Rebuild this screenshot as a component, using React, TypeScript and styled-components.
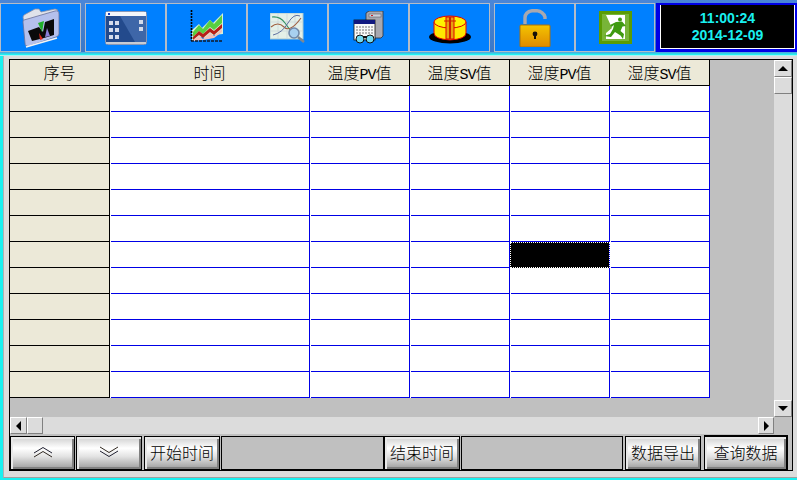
import styled, { createGlobalStyle } from "styled-components";

const GlobalStyle = createGlobalStyle`
	html, body {
		margin: 0;
		padding: 0;
		background: #19f0f0;
	}
`;

const CJK = `"Noto Sans CJK SC", "Liberation Sans", sans-serif`;

const Page = styled.div`
	width: 797px;
	height: 480px;
	overflow: hidden;
	display: flex;
	flex-direction: column;
	background: #19f0f0;
	font-family: ${CJK};
	font-weight: 300;
	color: #000;
`;

/* top navigation */
const TopBar = styled.div`
	height: 49px;
	padding-top: 3px;
	display: flex;
	background: linear-gradient(180deg, #4a86d8 0, #3a78c8 100%);
`;
const Tab = styled.div<{ $width: number; $gap?: number }>`
	box-sizing: border-box;
	width: ${(p) => p.$width}px;
	height: 49px;
	margin-right: ${(p) => p.$gap ?? 0}px;
	display: flex;
	align-items: center;
	justify-content: center;
	background: #0080ff;
	border: 1px solid #b4bcc8;
`;
const Clock = styled.div`
	flex: 1;
	height: 49px;
	box-sizing: border-box;
	margin-left: 1px;
	border: solid #0000e6;
	border-width: 2px 2px 3px 4px;
	background: #000;
	display: flex;
`;
const ClockInner = styled.div`
	flex: 1;
	border: solid #fff;
	border-width: 0 1px 1px 1px;
	display: flex;
	flex-direction: column;
	align-items: center;
	justify-content: center;
	gap: 3px;
	color: #19f0f0;
	font-family: "Liberation Sans", sans-serif;
	font-weight: 700;
	font-size: 14px;
	line-height: 14px;
`;
const BarEdge = styled.div`
	height: 4px;
	background: linear-gradient(180deg, #5aa0d8 0, #19f0f0 60%, #e8f4f4 100%);
`;

/* frame around the table page */
const Frame = styled.div`
	flex: 1;
	margin: 0 0 2px 3px;
	padding: 3px 5px 6px 5px;
	background: #dcdcdc;
	border-left: 1px solid #b0b0b0;
	border-bottom: 1px solid #a0a0a0;
	display: flex;
`;
const Panel = styled.div`
	box-sizing: border-box;
	width: 784px;
	border: 1px solid #000;
	background: #c0c0c0;
	display: flex;
	flex-direction: column;
`;
const ScrollArea = styled.div`
	display: grid;
	grid-template-columns: 764px 18px;
	grid-template-rows: 357px 17px;
`;
const TableView = styled.div`
	background: #c0c0c0;
`;
const Table = styled.div`
	display: grid;
	grid-template-columns: 100px 200px 100px 100px 100px 100px;
	grid-auto-rows: 26px;
	width: 700px;
`;
const HeadCell = styled.div`
	box-sizing: border-box;
	display: flex;
	align-items: center;
	justify-content: center;
	padding-bottom: 1px;
	background: #ece9d8;
	border-right: 1px solid #000;
	border-bottom: 1px solid #000;
	font-size: 16px;
	line-height: 22px;
`;
const Latin = styled.span`
	font-family: "Liberation Mono", monospace;
	font-size: 15px;
	line-height: 16px;
	letter-spacing: -1px;
`;
const RowHead = styled.div`
	box-sizing: border-box;
	background: #ece9d8;
	border-right: 1px solid #000;
	border-bottom: 1px solid #000;
`;
const Cell = styled.div<{ $selected?: boolean }>`
	box-sizing: border-box;
	border-right: 1px solid #0000e6;
	background: ${(p) =>
		p.$selected
			? "#000"
			: "linear-gradient(#0000e6, #0000e6) no-repeat 1px 100% / calc(100% - 1px) 1px #fff"};
	${(p) =>
		p.$selected &&
		`
		outline: 1px dotted #fff;
		outline-offset: -1px;
		border-bottom: 1px dotted #ffff00;
	`}
`;

/* scroll bars */
const VBar = styled.div`
	grid-column: 2;
	grid-row: 1;
	display: flex;
	flex-direction: column;
	background: #dcdcdc;
`;
const HBar = styled.div`
	grid-column: 1;
	grid-row: 2;
	display: flex;
	background: #dcdcdc;
`;
const Track = styled.div`
	flex: 1;
`;
const ScrollBtn = styled.div<{ $w: number; $h: number }>`
	box-sizing: border-box;
	width: ${(p) => p.$w}px;
	height: ${(p) => p.$h}px;
	flex: none;
	display: flex;
	align-items: center;
	justify-content: center;
	background: #dcdcdc;
	border: 1px solid;
	border-color: #fff #808080 #808080 #fff;
`;
const Arrow = styled.div<{ $dir: "up" | "down" | "left" | "right" }>`
	width: 0;
	height: 0;
	border-style: solid;
	${(p) => p.$dir === "up" && "border-width: 0 5px 5px 5px; border-color: transparent transparent #000 transparent;"}
	${(p) => p.$dir === "down" && "border-width: 5px 5px 0 5px; border-color: #000 transparent transparent transparent;"}
	${(p) => p.$dir === "left" && "border-width: 5px 5px 5px 0; border-color: transparent #000 transparent transparent;"}
	${(p) => p.$dir === "right" && "border-width: 5px 0 5px 5px; border-color: transparent transparent transparent #000;"}
`;

/* bottom toolbar */
const Toolbar = styled.div`
	flex: 1;
	padding-top: 2px;
	display: flex;
	align-items: stretch;
`;
const Button = styled.div<{ $width: number; $gap?: number; $strong?: boolean }>`
	box-sizing: border-box;
	width: ${(p) => p.$width}px;
	margin-right: ${(p) => p.$gap ?? 0}px;
	display: flex;
	align-items: center;
	justify-content: center;
	padding-bottom: 2px;
	font-size: 16px;
	line-height: 22px;
	border: 1px solid #000;
	${(p) => p.$strong && "border-width: 2px 2px 1px 1px; margin-top: -1px;"}
	box-shadow: inset 2px 2px 0 #e8e8e8, inset -2px -2px 0 #808080;
	background: linear-gradient(180deg, #cfcfcf 0, #ffffff 35%, #e4e4e4 60%, #9c9c9c 100%);
`;
const Field = styled.div<{ $width: number; $gap?: number }>`
	box-sizing: border-box;
	width: ${(p) => p.$width}px;
	margin-right: ${(p) => p.$gap ?? 0}px;
	background: #c0c0c0;
	border: 1px solid #000;
`;

/* icons */
const FolderIcon = () => (
	<svg width="38" height="40" viewBox="0 0 38 40">
		<path d="M1 9 L2 7 L13 1 L17 1 L19 4 L33 1 Q36 1 36 4 L36 10 L3 20 Z" fill="#dfe2ea" stroke="#8a90a8" strokeWidth="0.8" />
		<path d="M2 12 L33 3 Q37 2 37 6 L37 26 Q37 28 34 29 L7 38 Q3 39 3 35 L1 14 Q1 12 2 12 Z" fill="#b4c0ec" stroke="#6a7098" strokeWidth="0.8" />
		<path d="M4 39 L35 30" stroke="#f4f4f4" strokeWidth="1.6" />
		<path d="M6 23 L17 19 L21 24 L23 14 L32 11 L32 27 L22 30 L10 33 Z" fill="#0a0a0a" />
		<path d="M16 15 L22 13 L20 24 Z" fill="#20b028" />
		<path d="M17 25 L21 31 L18 32 Z" fill="#d82818" />
		<path d="M25 20 L28 28 L23 29 Z" fill="#8a80d8" />
	</svg>
);

const WindowIcon = () => (
	<svg width="42" height="34" viewBox="0 0 42 34">
		<rect x="0.5" y="0.5" width="41" height="33" rx="2" fill="#234a8c" stroke="#8898b8" />
		<rect x="1" y="1" width="40" height="4" fill="#f4f6fa" />
		<rect x="3" y="2" width="2" height="2" fill="#1840c0" />
		<path d="M15 5 L41 5 L41 31 L30 31 Z" fill="#3e66a8" />
		<path d="M1 31 L41 31 L41 33 L1 33 Z" fill="#c8ccd4" />
		<g fill="#d4dcec">
			<rect x="4" y="10" width="4" height="4" />
			<rect x="10" y="10" width="4" height="4" />
			<rect x="4" y="17" width="4" height="4" />
			<rect x="10" y="17" width="4" height="4" />
			<rect x="4" y="24" width="4" height="4" />
			<rect x="10" y="24" width="4" height="4" />
			<rect x="34" y="9" width="4" height="4" />
			<rect x="34" y="16" width="4" height="4" />
		</g>
	</svg>
);

const ChartIcon = () => (
	<svg width="34" height="36" viewBox="0 0 34 36">
		<path d="M2 31 L2 20 L9 14 L12 18 L20 10 L23 13 L33 3 L33 24 L24 25 L18 29 L12 27 L4 31 Z" fill="#d8f0d8" />
		<path d="M3 22 L9 15 L13 19 L20 10 L24 14 L32 5 L32 13 L24 20 L20 17 L13 24 L9 21 L3 27 Z" fill="#58d040" />
		<path d="M3 27 L9 21 L13 24 L20 18 L24 21 L32 14 L32 18 L24 25 L20 22 L13 28 L9 25 L3 30 Z" fill="#b82018" />
		<path d="M3 30 L9 26 L13 29 L20 23 L24 26 L32 19 L32 22 L24 28 L13 30 L3 31 Z" fill="#f4c0b8" />
		<path d="M1.5 0 L1.5 31" stroke="#000" strokeWidth="1.6" strokeDasharray="2 1" />
		<path d="M1 31 L33 31" stroke="#101828" strokeWidth="1.6" strokeDasharray="3 1" />
	</svg>
);

const MapIcon = () => (
	<svg width="36" height="30" viewBox="0 0 36 30">
		<rect x="0" y="0" width="33" height="26" fill="#e4f0e8" stroke="#a8c8d0" />
		<path d="M0 9 H33 M0 18 H33 M8 0 V26 M17 0 V26 M25 0 V26" stroke="#c8d4d8" strokeWidth="0.7" />
		<path d="M2 4 Q10 3 15 10 T24 22" stroke="#309060" strokeWidth="1.1" fill="none" />
		<path d="M1 14 Q8 8 14 14 T31 5" stroke="#a06040" strokeWidth="1.1" fill="none" />
		<path d="M3 22 Q12 20 18 10 T30 3" stroke="#6070a0" strokeWidth="1" fill="none" />
		<circle cx="24" cy="20" r="5" fill="#a8d0f0" stroke="#7088a8" strokeWidth="1.6" />
		<path d="M28 24 L34 29" stroke="#808890" strokeWidth="2.4" />
	</svg>
);

const ServerIcon = () => (
	<svg width="32" height="34" viewBox="0 0 32 34">
		<path d="M13 2 L16 0 L30 0 L30 25 L28 27 L13 27 Z" fill="#a8a8b0" stroke="#303038" strokeWidth="0.8" />
		<rect x="16" y="3" width="12" height="3" fill="#d0d0d8" stroke="#505058" strokeWidth="0.5" />
		<path d="M18 4.5 H20" stroke="#d02020" strokeWidth="1" />
		<rect x="1" y="9" width="21" height="20" fill="#f8f8f8" stroke="#101010" strokeWidth="0.8" />
		<rect x="1" y="9" width="21" height="4" fill="#101880" />
		<path d="M3 16 H20 M3 19 H20 M3 22 H20" stroke="#505050" strokeWidth="0.8" strokeDasharray="2 1" />
		<circle cx="7" cy="28" r="4" fill="#70d8f0" stroke="#101010" />
		<circle cx="17" cy="28" r="4" fill="#70d8f0" stroke="#101010" />
		<path d="M10 26 H14" stroke="#101010" strokeWidth="2" />
	</svg>
);

const TankIcon = () => (
	<svg width="42" height="33" viewBox="0 -4 42 33">
		<ellipse cx="21" cy="22" rx="21" ry="6.5" fill="#000" />
		<path d="M5 7 L5 18 Q5 24 21 25 Q37 24 37 18 L37 7 Z" fill="#ffe800" stroke="#e00000" />
		<ellipse cx="21" cy="7" rx="16" ry="6" fill="#fff200" stroke="#e00000" />
		<path d="M17 2 H25 V24 H17 Z" fill="#e8a010" stroke="#e00000" />
		<path d="M20 2 H22 V24 H20 Z" fill="#d02000" />
		<path d="M15 6 H27" stroke="#d02000" strokeWidth="1" />
	</svg>
);

const LockIcon = () => (
	<svg width="32" height="38" viewBox="0 0 32 38">
		<defs>
			<linearGradient id="lockBody" x1="0" y1="0" x2="0" y2="1">
				<stop offset="0" stopColor="#f4c400" />
				<stop offset="1" stopColor="#e08a00" />
			</linearGradient>
		</defs>
		<path d="M6 15 L6 9 Q6 2 15 1.5 Q24 1.5 26 8 L26 10" fill="none" stroke="#a8a8b0" strokeWidth="3.4" />
		<rect x="1" y="16" width="30" height="22" rx="1" fill="url(#lockBody)" stroke="#a87010" />
		<circle cx="16" cy="25" r="2.4" fill="#181008" />
		<rect x="15" y="25" width="2" height="5" fill="#181008" />
	</svg>
);

const ExitIcon = () => (
	<svg width="33" height="33" viewBox="0 0 33 33">
		<rect width="33" height="33" fill="#5a9c04" />
		<rect x="3" y="3" width="27" height="27" fill="#78b438" />
		<path d="M7 4 H26 V28 H7 V22 L13 17 Z" fill="#fff" />
		<circle cx="21" cy="8.5" r="2" fill="#3f9a10" />
		<path d="M17 11 L23 10.5 L27 15 L23.5 15.5 L21.5 20 L25 23 L24 28 L21.5 24.5 L16 21 L12 26 L5 25 L11 23 L14 18 L15 14 L12.5 16 L11 14 Z" fill="#3f9a10" />
	</svg>
);

const Chevrons = ({ down }: { down?: boolean }) => (
	<svg width="20" height="12" viewBox="0 0 20 12">
		<g transform={down ? "rotate(180 10 6)" : undefined} fill="none" strokeWidth="1">
			<path d="M1 7 L10 1.5 L19 7" stroke="#202030" />
			<path d="M1 11 L10 5.5 L19 11" stroke="#302820" />
		</g>
	</svg>
);

const HeadLabel = ({ first, latin, last }: { first: string; latin?: string; last?: string }) => (
	<HeadCell>
		<span>
			{first}
			{latin && <Latin>{latin}</Latin>}
			{last}
		</span>
	</HeadCell>
);

const tabs = [
	{ width: 81, gap: 4, icon: <FolderIcon /> },
	{ width: 81, icon: <WindowIcon /> },
	{ width: 81, icon: <ChartIcon /> },
	{ width: 81, icon: <MapIcon /> },
	{ width: 81, icon: <ServerIcon /> },
	{ width: 81, gap: 4, icon: <TankIcon /> },
	{ width: 81, icon: <LockIcon /> },
	{ width: 80, icon: <ExitIcon /> },
];

const rows = Array.from({ length: 12 }, (_, i) => i);
const dataCols = [0, 1, 2, 3, 4];

export default function App() {
	return (
		<Page>
			<GlobalStyle />
			<TopBar>
				{tabs.map((t, i) => (
					<Tab key={i} $width={t.width} $gap={t.gap}>
						{t.icon}
					</Tab>
				))}
				<Clock>
					<ClockInner>
						<div>11:00:24</div>
						<div>2014-12-09</div>
					</ClockInner>
				</Clock>
			</TopBar>
			<BarEdge />
			<Frame>
				<Panel>
					<ScrollArea>
						<TableView>
							<Table>
								<HeadLabel first="序号" />
								<HeadLabel first="时间" />
								<HeadLabel first="温度" latin="PV" last="值" />
								<HeadLabel first="温度" latin="SV" last="值" />
								<HeadLabel first="湿度" latin="PV" last="值" />
								<HeadLabel first="湿度" latin="SV" last="值" />
								{rows.map((r) => [
									<RowHead key={`h${r}`} />,
									...dataCols.map((c) => <Cell key={`${r}-${c}`} $selected={r === 6 && c === 3} />),
								])}
							</Table>
						</TableView>
						<VBar>
							<ScrollBtn $w={18} $h={17}>
								<Arrow $dir="up" />
							</ScrollBtn>
							<ScrollBtn $w={18} $h={17} />
							<Track />
							<ScrollBtn $w={18} $h={17}>
								<Arrow $dir="down" />
							</ScrollBtn>
						</VBar>
						<HBar>
							<ScrollBtn $w={17} $h={17}>
								<Arrow $dir="left" />
							</ScrollBtn>
							<ScrollBtn $w={16} $h={17} />
							<Track />
							<ScrollBtn $w={16} $h={17}>
								<Arrow $dir="right" />
							</ScrollBtn>
						</HBar>
					</ScrollArea>
					<Toolbar>
						<Button $width={65} $gap={1}>
							<Chevrons />
						</Button>
						<Button $width={66} $gap={2}>
							<Chevrons down />
						</Button>
						<Button $width={76} $gap={1}>开始时间</Button>
						<Field $width={163} />
						<Button $width={76} $gap={1}>结束时间</Button>
						<Field $width={162} $gap={2} />
						<Button $width={76} $gap={3}>数据导出</Button>
						<Button $width={84} $strong>查询数据</Button>
					</Toolbar>
				</Panel>
			</Frame>
		</Page>
	);
}
